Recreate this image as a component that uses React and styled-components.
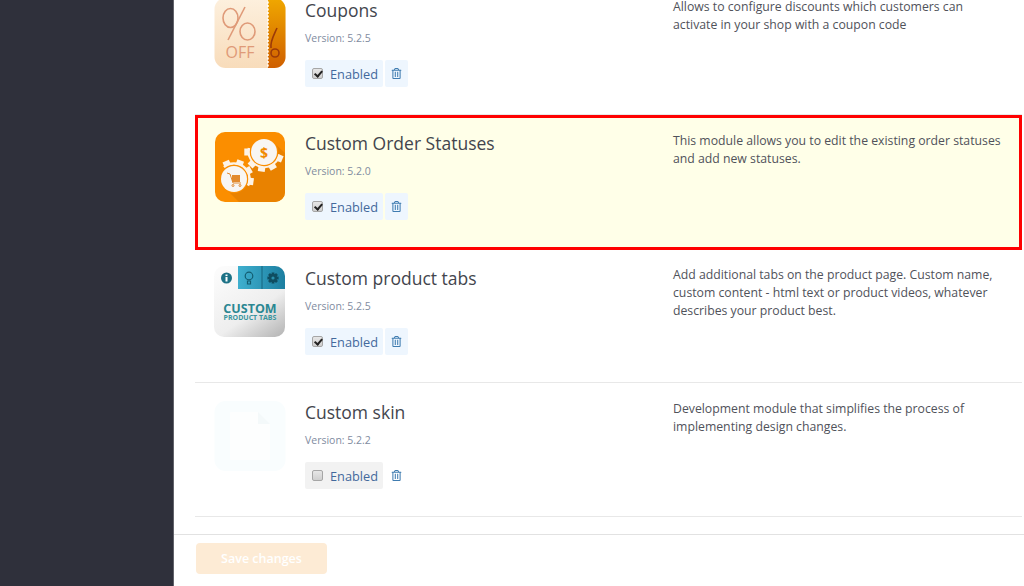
import React from "react";
import styled, { createGlobalStyle } from "styled-components";
import { FaRegTrashAlt } from "react-icons/fa";

const GlobalStyle = createGlobalStyle`
  html, body {
    margin: 0;
    height: 100%;
    overflow: hidden;
    background: #fff;
    font-family: "Open Sans", "Liberation Sans", sans-serif;
  }
`;

const modules = [
  {
    name: "Coupons",
    version: "5.2.5",
    description:
      "Allows to configure discounts which customers can activate in your shop with a coupon code",
    logo: "coupons",
    enabled: true,
  },
  {
    name: "Custom Order Statuses",
    version: "5.2.0",
    description:
      "This module allows you to edit the existing order statuses and add new statuses.",
    logo: "statuses",
    enabled: true,
    highlighted: true,
  },
  {
    name: "Custom product tabs",
    version: "5.2.5",
    description:
      "Add additional tabs on the product page. Custom name, custom content - html text or product videos, whatever describes your product best.",
    logo: "tabs",
    enabled: true,
  },
  {
    name: "Custom skin",
    version: "5.2.2",
    description:
      "Development module that simplifies the process of implementing design changes.",
    logo: "skin",
    enabled: false,
  },
];

const polar = (cx, cy, deg, r) => {
  const t = (deg * Math.PI) / 180;
  return `${(cx + Math.cos(t) * r).toFixed(1)},${(cy + Math.sin(t) * r).toFixed(1)}`;
};

const toothPoints = (cx, cy, deg, outer = 20, inner = 14.5, half = 10) =>
  [
    polar(cx, cy, deg - half * 1.4, inner),
    polar(cx, cy, deg - half, outer),
    polar(cx, cy, deg + half, outer),
    polar(cx, cy, deg + half * 1.4, inner),
  ].join(" ");

// part gear: teeth only on the given angles, the rest of the wheel is hidden
const Gear = ({ cx, cy, teeth, from, to }) => (
  <>
    <path
      d={`M${polar(cx, cy, from, 15.5)}A15.5 15.5 0 0 1 ${polar(cx, cy, to, 15.5)}`}
      fill="none"
      stroke="#fdf3e6"
      strokeWidth="2.5"
    />
    {teeth.map((deg) => (
      <polygon key={deg} points={toothPoints(cx, cy, deg)} fill="#fdf3e6" />
    ))}
    <circle cx={cx} cy={cy} r="14.200" fill="#fb8e00" />
    <circle cx={cx} cy={cy} r="13" fill="#f8f6f3" />
  </>
);

const CouponsLogo = () => (
  <svg width="72" height="72" viewBox="0 0 72 72">
    <defs>
      <linearGradient id="couponPaper" x1="0" y1="0" x2="0" y2="1">
        <stop offset="0" stopColor="#fdf0de" />
        <stop offset="1" stopColor="#f8dcbb" />
      </linearGradient>
      <linearGradient id="couponStub" x1="0" y1="0" x2="0" y2="1">
        <stop offset="0" stopColor="#f0a800" />
        <stop offset="1" stopColor="#cf5f00" />
      </linearGradient>
    </defs>
    <rect x="0.5" y="0" width="71" height="70" rx="11" fill="url(#couponPaper)" />
    <path d="M54 0h6.500a11 11 0 0 1 11 11v48a11 11 0 0 1-11 11H54z" fill="url(#couponStub)" />
    <path d="M54 0v70" stroke="#fff" strokeWidth="1.500" strokeDasharray="2 1.500" />
    <g fill="none" stroke="#df9a78" strokeWidth="1.600">
      <ellipse cx="16.500" cy="20" rx="7.500" ry="9.500" />
      <ellipse cx="33.500" cy="33.500" rx="7.500" ry="8.500" />
      <path d="M31 9 14 42" />
    </g>
    <text x="26" y="60" textAnchor="middle" fontFamily="Open Sans" fontSize="16" fill="#df9a78">
      OFF
    </text>
    <g fill="none" stroke="#9c3b08" strokeWidth="1.600">
      <path d="M63 30c-3 7-7 13-6 20" />
      <circle cx="61" cy="55" r="4" />
    </g>
  </svg>
);

const StatusesLogo = () => (
  <svg width="72" height="72" viewBox="0 0 72 72">
    <rect x="1" y="1" width="70" height="70" rx="10" fill="#fb8e00" />
    <path d="M11 57 34 38 57 9 71 22v39a10 10 0 0 1-10 10H25z" fill="#e98200" />
    <Gear cx={50} cy={21} teeth={[180, 135, 98, 60, 22]} from={10} to={195} />
    <text x="50" y="26.500" textAnchor="middle" fontFamily="Open Sans" fontWeight="700" fontSize="14" fill="#f08a00">
      $
    </text>
    <Gear cx={20} cy={48} teeth={[245, 290, 330, 8]} from={230} to={25} />
    <g fill="none" stroke="#e08a30" strokeWidth="1">
      <path d="M13 42l3 1 3 9h8" />
      <circle cx="19" cy="54.500" r="1" />
      <circle cx="26" cy="54.500" r="1" />
    </g>
    <rect x="18" y="44" width="8" height="7" fill="#e28a2d" />
  </svg>
);

const TabsLogo = () => (
  <svg width="72" height="72" viewBox="0 0 72 72">
    <defs>
      <linearGradient id="tabsBody" x1="0.2" y1="0" x2="0.9" y2="1">
        <stop offset="0" stopColor="#fbfbfb" />
        <stop offset="0.6" stopColor="#eeeeee" />
        <stop offset="1" stopColor="#b9b9b9" />
      </linearGradient>
      <linearGradient id="tabsBar" x1="0" y1="0" x2="1" y2="0">
        <stop offset="0" stopColor="#3fb0cf" />
        <stop offset="1" stopColor="#1c7ea0" />
      </linearGradient>
    </defs>
    <rect x="0" y="0" width="71" height="71" rx="10" fill="url(#tabsBody)" />
    <path d="M24 0h37a10 10 0 0 1 10 10v13H24z" fill="url(#tabsBar)" />
    <path d="M48 0v23" stroke="#17657f" strokeWidth="1" />
    <circle cx="12.500" cy="12" r="5.500" fill="#1d7286" />
    <rect x="11.500" y="11" width="2" height="4.500" fill="#fff" />
    <rect x="11.500" y="8.500" width="2" height="1.600" fill="#fff" />
    <g fill="none" stroke="#125c70" strokeWidth="1.200">
      <circle cx="35" cy="10" r="3.800" />
      <path d="M33.500 15h3v3h-3z" />
    </g>
    {[0, 45, 90, 135, 180, 225, 270, 315].map((deg) => (
      <polygon key={deg} points={toothPoints(59, 12, deg, 5.8, 3.8, 14)} fill="#0f4d61" />
    ))}
    <circle cx="59" cy="12" r="4.200" fill="#0f4d61" />
    <circle cx="59" cy="12" r="1.600" fill="#2a90ad" />
    <text x="36" y="47" textAnchor="middle" fontFamily="Open Sans" fontWeight="700" fontSize="12.500" fill="#2b8792">
      CUSTOM
    </text>
    <text x="36" y="54" textAnchor="middle" fontFamily="Open Sans" fontWeight="700" fontSize="7" fill="#3a959e">
      PRODUCT TABS
    </text>
  </svg>
);

const SkinLogo = () => (
  <svg width="72" height="72" viewBox="0 0 72 72">
    <rect x="0.500" y="1" width="71" height="70" rx="11" fill="#f9fdfe" />
    <path d="M17 12h27l12 12v35a1 1 0 0 1-1 1H17a1 1 0 0 1-1-1V13a1 1 0 0 1 1-1z" fill="#fdfefe" />
    <path d="M44 12v12h12z" fill="#f4f9fa" />
  </svg>
);

const logos = {
  coupons: CouponsLogo,
  statuses: StatusesLogo,
  tabs: TabsLogo,
  skin: SkinLogo,
};

const Page = styled.div`
  display: flex;
  height: 586px;
  overflow: hidden;
`;

const Sidebar = styled.aside`
  box-sizing: border-box;
  width: 174px;
  flex: none;
  background: #2f303b;
  border-right: 1px solid #62636b;
`;

const Main = styled.main`
  flex: 1;
  min-width: 0;
  display: flex;
  flex-direction: column;
`;

const List = styled.div`
  flex: 1;
  min-height: 0;
  overflow: hidden;
  padding: 0 2px 0 21px;
`;

const Items = styled.div`
  margin-top: -19px;
`;

const Row = styled.div`
  box-sizing: border-box;
  height: 134px;
  display: flex;
  padding: 19px 0 0 19px;
  border-bottom: 1px solid #e8e8e8;
  ${(p) =>
    p.$highlighted &&
    `
    height: 135px;
    padding: 15px 0 0 16px;
    border: 3px solid #ff0000;
    background: #ffffe8;
    margin-bottom: -1px;
  `}
`;

const Logo = styled.div`
  width: 72px;
  height: 72px;
  flex: none;
  margin-top: -2px;
`;

const Info = styled.div`
  width: 368px;
  flex: none;
  padding-left: 19px;
`;

const Title = styled.h3`
  margin: 0;
  font-size: 17.500px;
  line-height: 20px;
  font-weight: 400;
  color: #43454d;
`;

const Version = styled.div`
  margin-top: 11px;
  font-size: 10.500px;
  line-height: 15px;
  color: #7f8c9f;
`;

const Controls = styled.div`
  display: flex;
  gap: 2px;
  margin-top: 14px;
`;

const Toggle = styled.label`
  box-sizing: border-box;
  width: 78px;
  height: 27px;
  display: flex;
  align-items: center;
  gap: 7px;
  padding-left: 7px;
  border-radius: 2px;
  font-size: 12.750px;
  color: #43699c;
  background: ${(p) => (p.$on ? "#eef6fe" : "#f2f2f2")};
`;

const Check = styled.input`
  appearance: none;
  position: relative;
  box-sizing: border-box;
  width: 11px;
  height: 11px;
  margin: 0;
  border: 1px solid #a6a6a6;
  border-radius: 2px;
  background: linear-gradient(#e6e6e6, #cfcfcf);

  &:checked::after {
    content: "";
    position: absolute;
    left: 2.500px;
    top: -0.500px;
    width: 2.500px;
    height: 6px;
    border: solid #222;
    border-width: 0 2px 2px 0;
    transform: rotate(40deg);
  }
`;

const Remove = styled.button`
  width: 23px;
  height: 27px;
  padding: 0;
  border: 0;
  border-radius: 2px;
  display: flex;
  align-items: center;
  justify-content: center;
  color: #3f7cb0;
  font-size: 11px;
  background: ${(p) => (p.$on ? "#eef6fe" : "transparent")};
`;

const Description = styled.p`
  margin: ${(p) => (p.$highlighted ? "-1px" : "-2px")} 0 0;
  width: 332px;
  flex: none;
  font-size: 12.250px;
  line-height: 18px;
  color: #50525a;
`;

const Footer = styled.footer`
  flex: none;
  height: 52px;
  box-sizing: border-box;
  padding: 8px 22px 0;
  border-top: 1px solid #e2e2e2;
`;

const SaveButton = styled.button`
  display: block;
  width: 131px;
  height: 31px;
  padding: 0;
  border: 0;
  border-radius: 4px;
  font: 600 12.500px "Open Sans", "Liberation Sans", sans-serif;
  color: #fff;
  background: #fdebd5;
`;

const ModuleRow = ({ module }) => {
  const ModuleLogo = logos[module.logo];
  return (
    <Row $highlighted={module.highlighted}>
      <Logo>
        <ModuleLogo />
      </Logo>
      <Info>
        <Title>{module.name}</Title>
        <Version>Version: {module.version}</Version>
        <Controls>
          <Toggle $on={module.enabled}>
            <Check type="checkbox" defaultChecked={module.enabled} />
            Enabled
          </Toggle>
          <Remove $on={module.enabled} aria-label="Delete">
            <FaRegTrashAlt />
          </Remove>
        </Controls>
      </Info>
      <Description $highlighted={module.highlighted}>{module.description}</Description>
    </Row>
  );
};

const App = () => (
  <>
    <GlobalStyle />
    <Page>
      <Sidebar />
      <Main>
        <List>
          <Items>
            {modules.map((m) => (
              <ModuleRow key={m.name} module={m} />
            ))}
          </Items>
        </List>
        <Footer>
          <SaveButton>Save changes</SaveButton>
        </Footer>
      </Main>
    </Page>
  </>
);

export default App;
